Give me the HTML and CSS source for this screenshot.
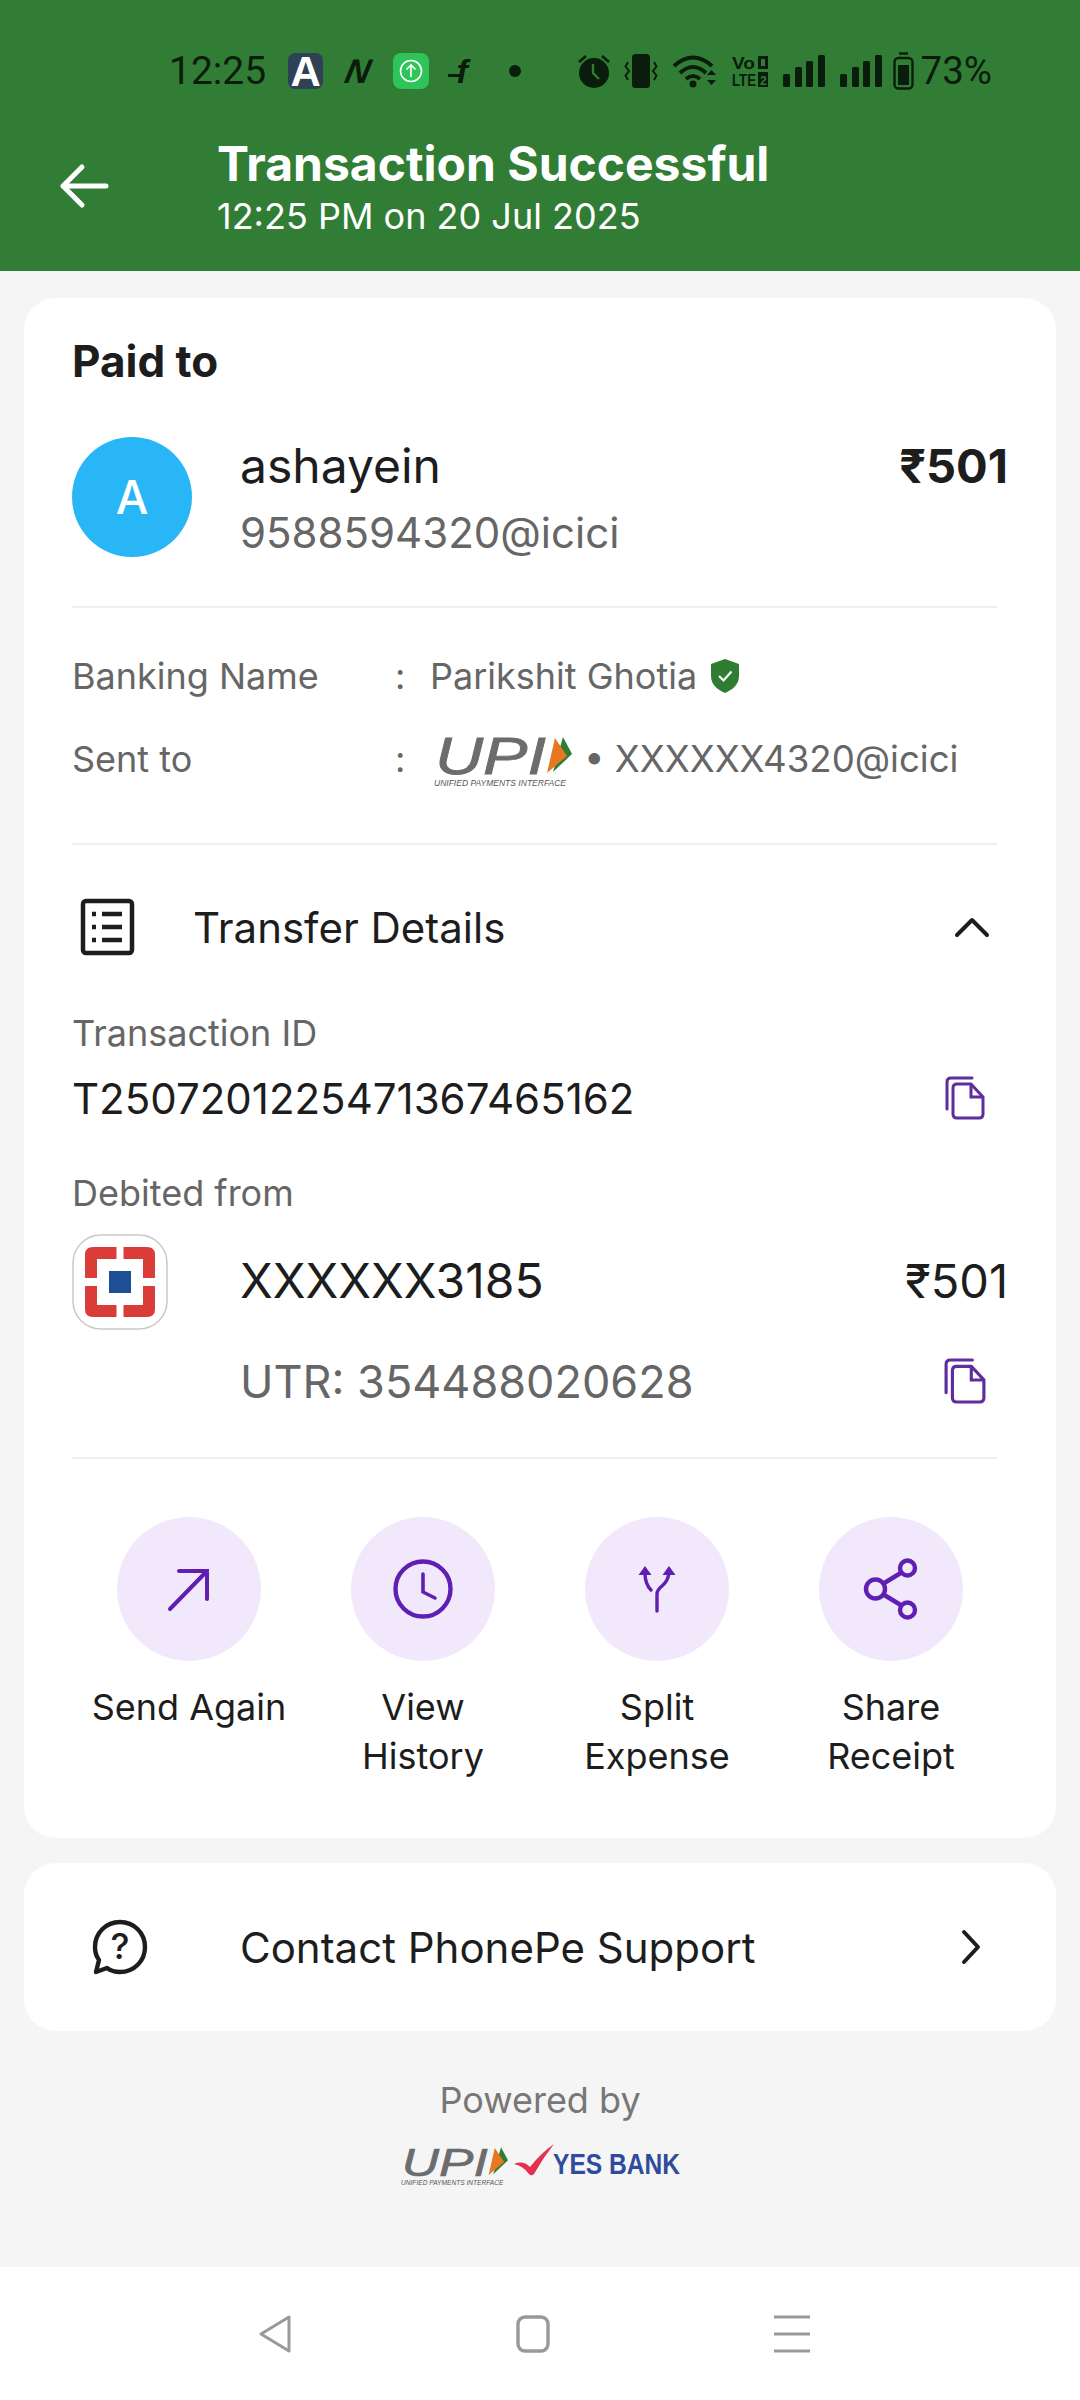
FILE: index.html
```html
<!DOCTYPE html>
<html lang="en">
<head>
    <meta charset="UTF-8">
    <meta name="viewport" content="width=device-width, initial-scale=1.0">
    <title>Transaction Successful</title>
    <link rel="stylesheet" href="styles.css">
</head>
<body>
    <svg class="defs" width="0" height="0" aria-hidden="true">
        <symbol id="copy-icon" viewBox="0 0 40 44">
            <path d="M27 2H6Q2 2 2 6V33" fill="none" stroke="#5e2d9e" stroke-width="3" stroke-linecap="round"/>
            <path d="M12 8H26L38 21V38Q38 42 34 42H12Q8 42 8 38V12Q8 8 12 8Z" fill="none" stroke="#5e2d9e" stroke-width="3"/>
            <path d="M26 8V21H38" fill="none" stroke="#5e2d9e" stroke-width="3"/>
        </symbol>
        <symbol id="signal-icon" viewBox="0 0 42 32">
            <rect x="0" y="19" width="7" height="13" rx="1.5"/>
            <rect x="12" y="12" width="7" height="20" rx="1.5"/>
            <rect x="24" y="6" width="7" height="26" rx="1.5" transform="translate(-1 0)"/>
            <rect x="35" y="0" width="7" height="32" rx="1.5"/>
        </symbol>
    </svg>

    <header class="top">
        <div class="status">
            <div class="status-group status-left">
                <span class="status-text status-time">12:25</span>
                <span class="app-a">A</span>
                <span class="app-n">N</span>
                <svg width="36" height="36" viewBox="0 0 36 36">
                    <rect width="36" height="36" rx="8" fill="#2fc45a"/>
                    <circle cx="18" cy="18" r="10.5" fill="none" stroke="#fff" stroke-width="1.6"/>
                    <path d="M18 24V12M13.5 16.5L18 12L22.5 16.5" fill="none" stroke="#fff" stroke-width="1.6"/>
                </svg>
                <span class="app-f">f</span>
                <span class="status-dot"></span>
            </div>
            <div class="status-group status-right">
                <svg width="32" height="36" viewBox="0 0 32 36" fill="#0a1c0b">
                    <circle cx="16" cy="20" r="15"/>
                    <path d="M1 9L8 3M31 9L24 3" stroke="#0a1c0b" stroke-width="2.6"/>
                    <path d="M15 11V20L21 26" fill="none" stroke="#317d35" stroke-width="2.4"/>
                </svg>
                <svg width="32" height="32" viewBox="0 0 32 32" fill="none" stroke="#0a1c0b" stroke-width="2">
                    <rect x="8" y="0" width="16" height="32" rx="2.5" fill="#0a1c0b"/>
                    <path d="M3 7L0.5 11.5L4 16L0.5 20.5L3 25M29 7L31.5 11.5L28 16L31.5 20.5L29 25"/>
                </svg>
                <svg width="45" height="34" viewBox="0 0 45 34" fill="none" stroke="#0a1c0b" stroke-width="4">
                    <path d="M2 12Q21 -5 40 12M8 19Q21 7 34 19M14 25Q21 19 28 25"/>
                    <circle cx="21" cy="30" r="3.5" fill="#0a1c0b" stroke="none"/>
                    <path d="M35 21L39.5 16L44 21ZM35 26L39.5 31L44 26Z" fill="#0a1c0b" stroke="none"/>
                </svg>
                <svg width="36" height="32" viewBox="0 0 36 32">
                    <text x="0" y="14" class="volte" textLength="23" lengthAdjust="spacingAndGlyphs">Vo</text>
                    <rect x="26" y="1" width="10" height="13" fill="#0a1c0b"/>
                    <rect x="29" y="4" width="4" height="7" fill="#317d35"/>
                    <text x="0" y="31" class="volte" textLength="24" lengthAdjust="spacingAndGlyphs">LTE</text>
                    <rect x="26" y="17" width="10" height="15" fill="#0a1c0b"/>
                    <text x="28" y="30" class="volte-two">2</text>
                </svg>
                <svg class="signal" width="42" height="32"><use href="#signal-icon"/></svg>
                <svg class="signal" width="42" height="32"><use href="#signal-icon"/></svg>
                <svg class="battery" width="21" height="38" viewBox="0 0 21 38" fill="none" stroke="#0a1c0b" stroke-width="2.4">
                    <path d="M6 1.5H15"/>
                    <rect x="1.5" y="6" width="18" height="30.5" rx="4"/>
                    <rect x="5" y="13" width="11" height="20" fill="#0a1c0b" stroke="none"/>
                </svg>
                <span class="status-text status-percent">73%</span>
            </div>
        </div>
        <div class="toolbar">
            <svg class="back-arrow" width="48" height="44" viewBox="0 0 48 44" fill="none" stroke="#fff" stroke-width="5" stroke-linecap="round" stroke-linejoin="round">
                <path d="M46 22H3M22 3L3 22L22 41"/>
            </svg>
            <div>
                <div class="page-title">Transaction Successful</div>
                <div class="page-time">12:25 PM on 20 Jul 2025</div>
            </div>
        </div>
    </header>

    <main class="content">
        <section class="card card-main">
            <div class="paid-to">Paid to</div>

            <div class="payee">
                <div class="avatar">A</div>
                <div class="payee-info">
                    <div class="payee-name">ashayein</div>
                    <div class="payee-id">9588594320@icici</div>
                </div>
                <div class="amount-bold">₹501</div>
            </div>

            <div class="divider divider-payee"></div>

            <div class="info-row info-bank">
                <span class="info-label">Banking Name</span>
                <span class="info-colon">:</span>
                <span class="info-value">Parikshit Ghotia</span>
                <svg class="shield" width="28" height="34" viewBox="0 0 28 34">
                    <path d="M14 0L28 5V17C28 26 21 31 14 34C7 31 0 26 0 17V5Z" fill="#2e7d32"/>
                    <path d="M8 17L12.5 21.5L20.5 12.5" fill="none" stroke="#fff" stroke-width="2.2"/>
                </svg>
            </div>
            <div class="info-row info-sent">
                <span class="info-label">Sent to</span>
                <span class="info-colon">:</span>
                <svg class="upi-inline" width="138" height="54" viewBox="0 0 138 54">
                    <text x="1" y="41" class="upi-letters" textLength="111" lengthAdjust="spacingAndGlyphs">UPI</text>
                    <polygon points="129,4 138,21 119,39" fill="#2e7d32"/>
                    <polygon points="121,5 133,23 113,40" fill="#e87722"/>
                    <text x="0" y="53" class="upi-small" textLength="132" lengthAdjust="spacingAndGlyphs">UNIFIED PAYMENTS INTERFACE</text>
                </svg>
                <span class="info-vpa">• XXXXXX4320@icici</span>
            </div>

            <div class="divider divider-sent"></div>

            <div class="transfer-head">
                <svg class="list-icon" width="55" height="58" viewBox="0 0 55 58" fill="none" stroke="#1d1d1d" stroke-width="4.5">
                    <rect x="3" y="3" width="49" height="52" rx="3"/>
                    <path d="M22 16H42M22 29H42M22 42H42"/>
                    <path d="M12 16H16M12 29H16M12 42H16"/>
                </svg>
                <span class="transfer-title">Transfer Details</span>
                <svg class="chevron-up" width="34" height="20" viewBox="0 0 34 20" fill="none" stroke="#1d1d1d" stroke-width="4" stroke-linecap="round" stroke-linejoin="round">
                    <path d="M2 18L17 3L32 18"/>
                </svg>
            </div>

            <div class="small-label label-txn">Transaction ID</div>
            <div class="txn-row">
                <span class="txn-id">T2507201225471367465162</span>
                <svg class="copy" width="40" height="44"><use href="#copy-icon"/></svg>
            </div>

            <div class="small-label label-debit">Debited from</div>
            <div class="bank">
                <svg class="bank-logo" width="96" height="96" viewBox="0 0 96 96">
                    <rect x="1" y="1" width="94" height="94" rx="28" fill="#fff" stroke="#c9c9c9" stroke-width="1.5"/>
                    <g fill="#da3d38">
                        <path id="bank-corner" d="M13 44V21Q13 13 21 13H44.5V25H25V44Z"/>
                        <use href="#bank-corner" transform="matrix(-1 0 0 1 96 0)"/>
                        <use href="#bank-corner" transform="matrix(1 0 0 -1 0 96)"/>
                        <use href="#bank-corner" transform="matrix(-1 0 0 -1 96 96)"/>
                    </g>
                    <rect x="37" y="37" width="22" height="22" fill="#1d4f96"/>
                </svg>
                <div class="bank-info">
                    <div class="bank-line">
                        <span class="bank-account">XXXXXX3185</span>
                        <span class="amount-plain">₹501</span>
                    </div>
                    <div class="utr-line">
                        <span class="utr">UTR: 354488020628</span>
                        <svg class="copy copy-utr" width="42" height="48"><use href="#copy-icon"/></svg>
                    </div>
                </div>
            </div>

            <div class="divider divider-bank"></div>

            <div class="actions">
                <div class="action">
                    <div class="action-circle">
                        <svg width="48" height="48" viewBox="0 0 48 48" fill="none" stroke="#5f1fb2" stroke-width="4" stroke-linecap="round">
                            <path d="M5 44L42 6M14 6H42V34"/>
                        </svg>
                    </div>
                    <div class="action-label">Send Again</div>
                </div>
                <div class="action">
                    <div class="action-circle">
                        <svg width="64" height="64" viewBox="0 0 64 64" fill="none" stroke="#5f1fb2" stroke-width="4.4" stroke-linecap="round">
                            <circle cx="32" cy="32" r="27.5"/>
                            <path d="M32 17V35L44 41" stroke-width="3.6"/>
                        </svg>
                    </div>
                    <div class="action-label">View<br>History</div>
                </div>
                <div class="action">
                    <div class="action-circle">
                        <svg width="48" height="56" viewBox="0 0 48 56" fill="none" stroke="#5f1fb2" stroke-width="3.4" stroke-linecap="round">
                            <path d="M24 50V33Q24 29 29 25Q36 19 36 10M18 29Q12 23 12 12"/>
                            <path d="M12 5L5.5 14H18.5ZM36 5L29.5 14H42.5Z" fill="#5f1fb2" stroke="none"/>
                        </svg>
                    </div>
                    <div class="action-label">Split<br>Expense</div>
                </div>
                <div class="action">
                    <div class="action-circle">
                        <svg width="64" height="64" viewBox="0 0 64 64" fill="none" stroke="#5f1fb2" stroke-width="4.4">
                            <circle cx="48.5" cy="11" r="7.5"/>
                            <circle cx="16.5" cy="32" r="9.5"/>
                            <circle cx="48.5" cy="53" r="7.5"/>
                            <path d="M24.5 26.5L42.5 15.5M24.5 37.5L42.5 48.5"/>
                        </svg>
                    </div>
                    <div class="action-label">Share<br>Receipt</div>
                </div>
            </div>
        </section>

        <section class="card card-support">
            <div class="support-icon">
                <svg width="56" height="56" viewBox="0 0 56 56" fill="none" stroke="#1d1d1d" stroke-width="4.4" stroke-linejoin="round">
                    <path d="M28 3C42 3 53 14 53 28C53 42 42 53 28 53C23 53 19 52 15 49L4 53L7 41C4 37 3 33 3 28C3 14 14 3 28 3Z"/>
                </svg>
                <span class="support-mark">?</span>
            </div>
            <span class="support-text">Contact PhonePe Support</span>
            <svg class="chevron-right" width="20" height="36" viewBox="0 0 20 36" fill="none" stroke="#1d1d1d" stroke-width="4" stroke-linecap="round" stroke-linejoin="round">
                <path d="M3 3L17 18L3 33"/>
            </svg>
        </section>

        <div class="powered">Powered by</div>
        <div class="partner-logos">
            <svg width="107" height="42" viewBox="0 0 138 54">
                <text x="1" y="41" class="upi-letters" textLength="111" lengthAdjust="spacingAndGlyphs">UPI</text>
                <polygon points="129,4 138,21 119,39" fill="#2e7d32"/>
                <polygon points="121,5 133,23 113,40" fill="#e87722"/>
                <text x="0" y="53" class="upi-small" textLength="132" lengthAdjust="spacingAndGlyphs">UNIFIED PAYMENTS INTERFACE</text>
            </svg>
            <svg width="166" height="32" viewBox="0 0 166 32">
                <path d="M0 20Q9 16 16 23Q27 9 40 0Q29 14 20 30Q17 33 14 29Q9 22 0 20Z" fill="#e5304f"/>
                <text x="39" y="30" class="yes-bank" textLength="127" lengthAdjust="spacingAndGlyphs">YES BANK</text>
            </svg>
        </div>
    </main>

    <nav class="system-nav">
        <svg width="34" height="38" viewBox="0 0 34 38" fill="none" stroke="#999" stroke-width="3" stroke-linejoin="round">
            <path d="M31 2V36L3 19Z"/>
        </svg>
        <svg width="34" height="38" viewBox="0 0 34 38" fill="none" stroke="#999" stroke-width="3.4">
            <rect x="2" y="2" width="30" height="34" rx="7"/>
        </svg>
        <svg width="36" height="38" viewBox="0 0 36 38" fill="none" stroke="#999" stroke-width="3">
            <path d="M0 2H36M0 19H36M0 36H36"/>
        </svg>
    </nav>
</body>
</html>
```

FILE: styles.css
```css
* {
  box-sizing: border-box;
}

html,
body {
  margin: 0;
  padding: 0;
}

body {
  width: 1080px;
  height: 2400px;
  display: flex;
  flex-direction: column;
  background: #f5f5f5;
  color: #1d1d1d;
  font-family: Inter, "Noto Sans", sans-serif;
  overflow: hidden;
}

svg {
  display: block;
  flex-shrink: 0;
  overflow: visible;
}

.defs {
  position: absolute;
}

.upi-letters {
  font-family: "Liberation Sans", sans-serif;
  font-size: 51px;
  font-style: italic;
  fill: #6b6c6e;
  stroke: #6b6c6e;
  stroke-width: 0.8px;
}

.upi-small {
  font-family: "Liberation Sans", sans-serif;
  font-size: 9px;
  font-style: italic;
  fill: #555;
}

.yes-bank {
  font-family: "Liberation Sans", sans-serif;
  font-size: 29px;
  font-weight: 700;
  fill: #2f4c9c;
}

/* top green area */
.top {
  height: 271px;
  background: #317d35;
}

.status {
  height: 134px;
  padding: 8px 88px 0 169px;
  display: flex;
  align-items: center;
  justify-content: space-between;
  color: #0a1c0b;
}

.status-group {
  display: flex;
  align-items: center;
}

.status-left {
  gap: 22px;
}

.status-right {
  gap: 15px;
}

.status-text {
  font-family: Roboto, sans-serif;
  line-height: 44px;
}

.status-time {
  font-size: 39px;
}

.status-percent {
  margin-left: -8px;
  font-size: 38.5px;
}

.app-a {
  width: 35px;
  height: 36px;
  border-radius: 7px;
  background: #2f4156;
  color: #fff;
  font-family: "Liberation Sans", sans-serif;
  font-weight: 700;
  font-size: 42px;
  line-height: 38px;
  text-align: center;
}

.app-n {
  width: 26px;
  font-family: "Liberation Sans", sans-serif;
  font-weight: 700;
  font-style: italic;
  font-size: 34px;
  line-height: 40px;
  text-align: center;
  transform: skewX(-12deg);
}

.app-f {
  position: relative;
  width: 22px;
  font-family: "Liberation Sans", sans-serif;
  font-weight: 700;
  font-style: italic;
  font-size: 34px;
  line-height: 40px;
  text-align: center;
}

.app-f::before {
  content: "";
  position: absolute;
  left: -3px;
  top: 23px;
  width: 12px;
  height: 3px;
  background: #0a1c0b;
}

.status-dot {
  width: 12px;
  height: 12px;
  margin-left: 14px;
  border-radius: 50%;
  background: #0a1c0b;
}

.volte {
  font-family: "Liberation Sans", sans-serif;
  font-size: 16px;
  font-weight: 700;
  fill: #0a1c0b;
}

.volte-two {
  font-family: "Liberation Sans", sans-serif;
  font-size: 12px;
  font-weight: 700;
  fill: #317d35;
}

.signal {
  fill: #0a1c0b;
}

.battery {
  margin-left: -4px;
}

.toolbar {
  height: 137px;
  padding: 0 0 33px 60px;
  display: flex;
  align-items: center;
  gap: 109px;
  color: #fff;
}

.page-title {
  font-size: 48px;
  line-height: 60px;
  font-weight: 700;
}

.page-time {
  font-size: 36px;
  line-height: 44px;
}

/* cards */
.content {
  flex: 1;
  padding: 27px 24px 0;
}

.card {
  background: #fff;
  border-radius: 32px;
}

.card-main {
  padding: 38px 48px 57px;
}

.paid-to {
  font-size: 44px;
  line-height: 50px;
  font-weight: 700;
}

.payee {
  margin-top: 51px;
  display: flex;
  align-items: flex-start;
}

.avatar {
  width: 120px;
  height: 120px;
  border-radius: 50%;
  background: #29b6f6;
  color: #fff;
  font-size: 46px;
  font-weight: 500;
  line-height: 120px;
  text-align: center;
}

.payee-info {
  margin-left: 48px;
  flex: 1;
}

.payee-name {
  font-size: 48px;
  line-height: 58px;
}

.payee-id {
  margin-top: 13px;
  font-size: 42px;
  line-height: 50px;
  color: #666;
}

.amount-bold {
  font-size: 47px;
  line-height: 58px;
  font-weight: 700;
}

.divider {
  width: 925px;
  height: 2px;
  background: #eee;
}

.divider-payee {
  margin-top: 48px;
}

.divider-sent {
  margin-top: 59px;
}

.divider-bank {
  margin-top: 51px;
}

.info-row {
  height: 50px;
  display: flex;
  align-items: center;
  color: #666;
  font-size: 36px;
}

.info-bank {
  margin-top: 43px;
}

.info-sent {
  margin-top: 33px;
}

.info-label {
  width: 323px;
}

.info-colon {
  width: 35px;
}

.shield {
  margin-left: 14px;
}

.upi-inline {
  margin: 2px 0 0 4px;
}

.info-vpa {
  margin-left: 12px;
  font-size: 36.6px;
}

.transfer-head {
  margin-top: 53px;
  height: 58px;
  display: flex;
  align-items: center;
}

.list-icon {
  margin-left: 8px;
}

.transfer-title {
  margin-left: 58px;
  font-size: 42px;
  flex: 1;
}

.chevron-up {
  margin-right: 19px;
}

.small-label {
  font-size: 36px;
  line-height: 44px;
  color: #666;
}

.label-txn {
  margin-top: 55px;
}

.label-debit {
  margin-top: 48px;
}

.txn-row {
  margin-top: 18px;
  height: 50px;
  display: flex;
  align-items: center;
  justify-content: space-between;
}

.txn-id {
  font-size: 42px;
}

.copy {
  margin-right: 23px;
}

.bank {
  margin-top: 19px;
  display: flex;
  align-items: flex-start;
}

.bank-info {
  margin-left: 72px;
  padding-top: 16px;
  flex: 1;
}

.bank-line {
  height: 60px;
  display: flex;
  align-items: center;
  justify-content: space-between;
}

.bank-account {
  font-size: 48px;
}

.amount-plain {
  font-size: 47px;
}

.utr-line {
  margin-top: 46px;
  height: 50px;
  display: flex;
  align-items: center;
  justify-content: space-between;
  color: #666;
  font-size: 45px;
}

.copy-utr {
  margin-right: 22px;
}

/* round action buttons */
.actions {
  margin-top: 58px;
  display: grid;
  grid-template-columns: repeat(4, 234px);
}

.action {
  display: flex;
  flex-direction: column;
  align-items: center;
}

.action-circle {
  width: 144px;
  height: 144px;
  border-radius: 50%;
  background: #f2e8fb;
  display: flex;
  align-items: center;
  justify-content: center;
}

.action-label {
  margin-top: 22px;
  min-height: 98px;
  font-size: 36px;
  line-height: 49px;
  text-align: center;
}

.card-support {
  margin-top: 25px;
  height: 168px;
  padding: 0 75px 0 68px;
  display: flex;
  align-items: center;
}

.support-icon {
  position: relative;
  width: 56px;
  height: 56px;
}

.support-mark {
  position: absolute;
  inset: 0;
  font-size: 36px;
  font-weight: 500;
  line-height: 54px;
  text-align: center;
}

.support-text {
  margin-left: 92px;
  flex: 1;
  font-size: 42px;
}

.powered {
  margin-top: 47px;
  font-size: 36px;
  line-height: 44px;
  color: #777;
  text-align: center;
}

.partner-logos {
  margin-top: 22px;
  display: flex;
  align-items: flex-start;
  justify-content: center;
  gap: 6px;
}

.system-nav {
  height: 133px;
  padding-right: 12px;
  background: #fff;
  display: flex;
  align-items: center;
  justify-content: center;
  gap: 224px;
}
```
